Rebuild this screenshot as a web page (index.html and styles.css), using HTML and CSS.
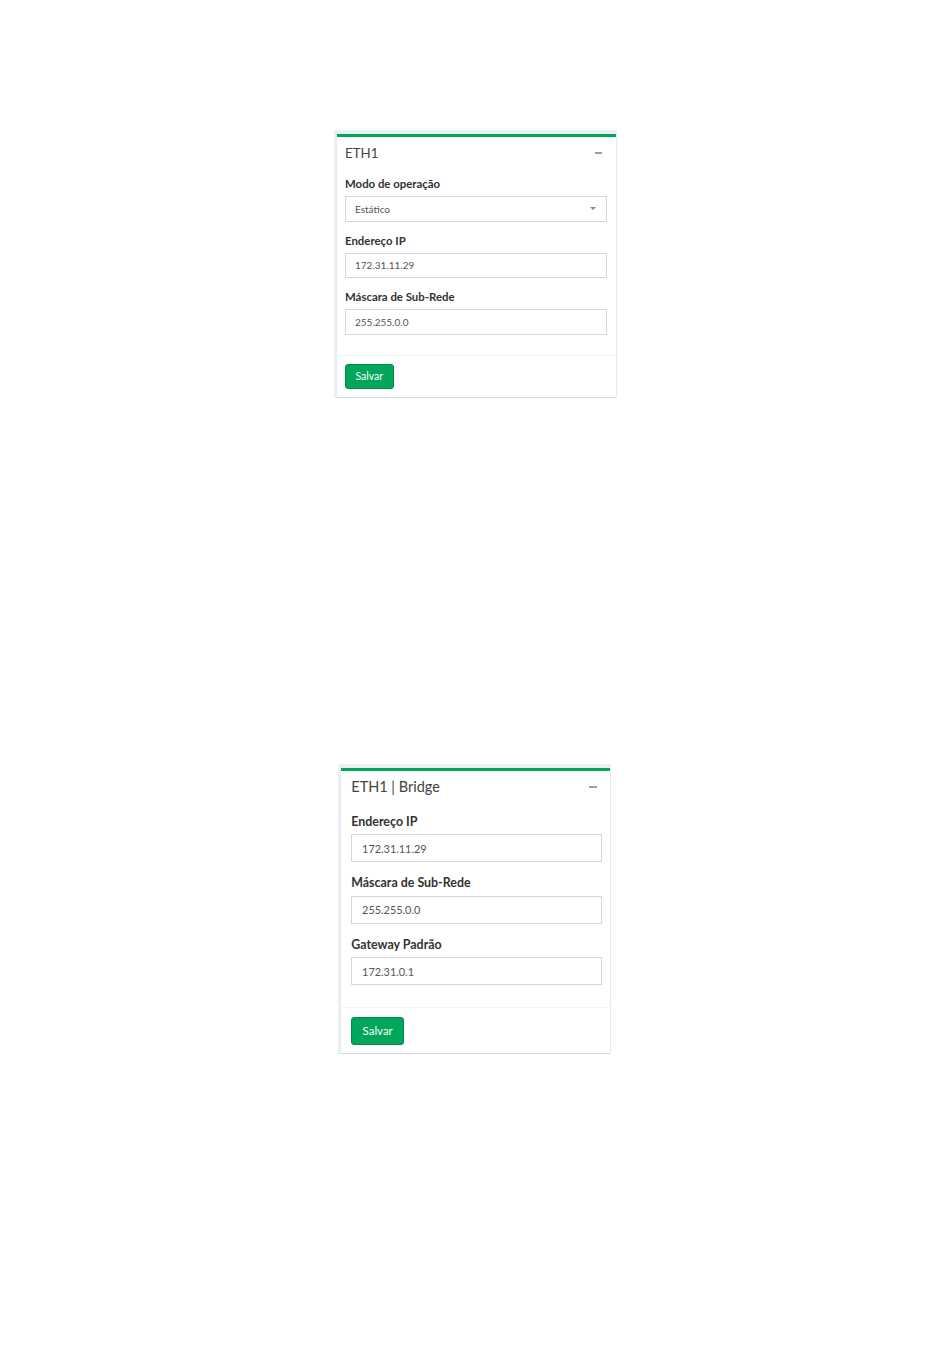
FILE: index.html
```html
<!DOCTYPE html>
<html lang="pt-BR">
<head>
<meta charset="utf-8">
<title>ETH1</title>
<link rel="stylesheet" href="styles.css">
</head>
<body>
<div class="page">
  <section class="panel panel--a">
    <div class="box">
      <div class="box-header">
        <h3 class="box-title">ETH1</h3>
        <span class="box-tool"><span class="minus"></span></span>
      </div>
      <div class="box-body">
        <div class="form-group">
          <label class="label">Modo de operação</label>
          <div class="select">Estático<span class="caret"></span></div>
        </div>
        <div class="form-group">
          <label class="label">Endereço IP</label>
          <div class="input">172.31.11.29</div>
        </div>
        <div class="form-group">
          <label class="label">Máscara de Sub-Rede</label>
          <div class="input">255.255.0.0</div>
        </div>
      </div>
      <div class="box-footer">
        <button class="btn" type="button">Salvar</button>
      </div>
    </div>
  </section>

  <section class="panel panel--b">
    <div class="box">
      <div class="box-header">
        <h3 class="box-title">ETH1 | Bridge</h3>
        <span class="box-tool"><span class="minus"></span></span>
      </div>
      <div class="box-body">
        <div class="form-group">
          <label class="label">Endereço IP</label>
          <div class="input">172.31.11.29</div>
        </div>
        <div class="form-group">
          <label class="label">Máscara de Sub-Rede</label>
          <div class="input">255.255.0.0</div>
        </div>
        <div class="form-group">
          <label class="label">Gateway Padrão</label>
          <div class="input">172.31.0.1</div>
        </div>
      </div>
      <div class="box-footer">
        <button class="btn" type="button">Salvar</button>
      </div>
    </div>
  </section>
</div>
</body>
</html>
```
FILE: styles.css
```css
* { box-sizing: border-box; }

body {
  margin: 0;
  background: #fff;
  font-family: Lato, "Open Sans", "Liberation Sans", sans-serif;
}

.page {
  padding-top: 130px;
  display: flex;
  flex-direction: column;
  align-items: flex-start;
}

.panel {
  --s: 1;
  --pl: 8px;
  --pr: 9px;
  background: #ecf0f5;
  padding: calc(4px * var(--s)) 1px 1px calc(3px * var(--s));
}

.panel--a {
  margin-left: 334px;
  width: 283px;
}

.panel--b {
  --s: 1.09;
  --pl: 10px;
  --pr: 8px;
  margin-left: 338px;
  margin-top: 366px;
  width: 273px;
}

.box {
  background: #fff;
  border-top: calc(3px * var(--s)) solid #00a65a;
  box-shadow: 0 1px 1px rgba(0, 0, 0, 0.1);
}

.box-header {
  display: flex;
  align-items: center;
  justify-content: space-between;
  padding: 7.5px calc(var(--pr) + 5px) 8.5px var(--pl);
}

.panel--b .box-header {
  padding-top: 6.8px;
  padding-bottom: 9.3px;
}

.box-title {
  margin: 0;
  font-size: calc(13.3px * var(--s));
  line-height: calc(16px * var(--s));
  font-weight: 400;
  color: #444;
}

.box-tool {
  display: flex;
  align-items: center;
}

.minus {
  display: block;
  width: calc(7px * var(--s));
  height: 2px;
  background: #97a0b3;
}

.box-body {
  padding: calc(8px * var(--s)) var(--pr) calc(8px * var(--s)) var(--pl);
}

.form-group {
  margin-bottom: calc(12px * var(--s));
}

.label {
  display: block;
  font-size: calc(11.4px * var(--s));
  line-height: calc(14px * var(--s));
  font-weight: 700;
  color: #333;
  margin-bottom: calc(5px * var(--s));
}

.input,
.select {
  display: flex;
  align-items: center;
  width: 100%;
  height: calc(25.5px * var(--s));
  border: 1px solid #d2d6de;
  padding: 0 calc(9px * var(--s));
  font-size: calc(10px * var(--s));
  color: #555;
  background: #fff;
}

.select {
  justify-content: space-between;
}

.caret {
  width: 0;
  height: 0;
  border-left: 3px solid transparent;
  border-right: 3px solid transparent;
  border-top: 3px solid #888;
  margin-right: 1px;
}

.box-footer {
  border-top: 1px solid #f4f4f4;
  padding: calc(8px * var(--s)) var(--pr) calc(8px * var(--s)) var(--pl);
}

.btn {
  height: calc(25.5px * var(--s));
  padding: 0 calc(9.5px * var(--s));
  background: #00a65a;
  border: 1px solid #008d4c;
  border-radius: 3px;
  color: #fff;
  font-family: inherit;
  font-size: calc(10.5px * var(--s));
  cursor: pointer;
}
```
